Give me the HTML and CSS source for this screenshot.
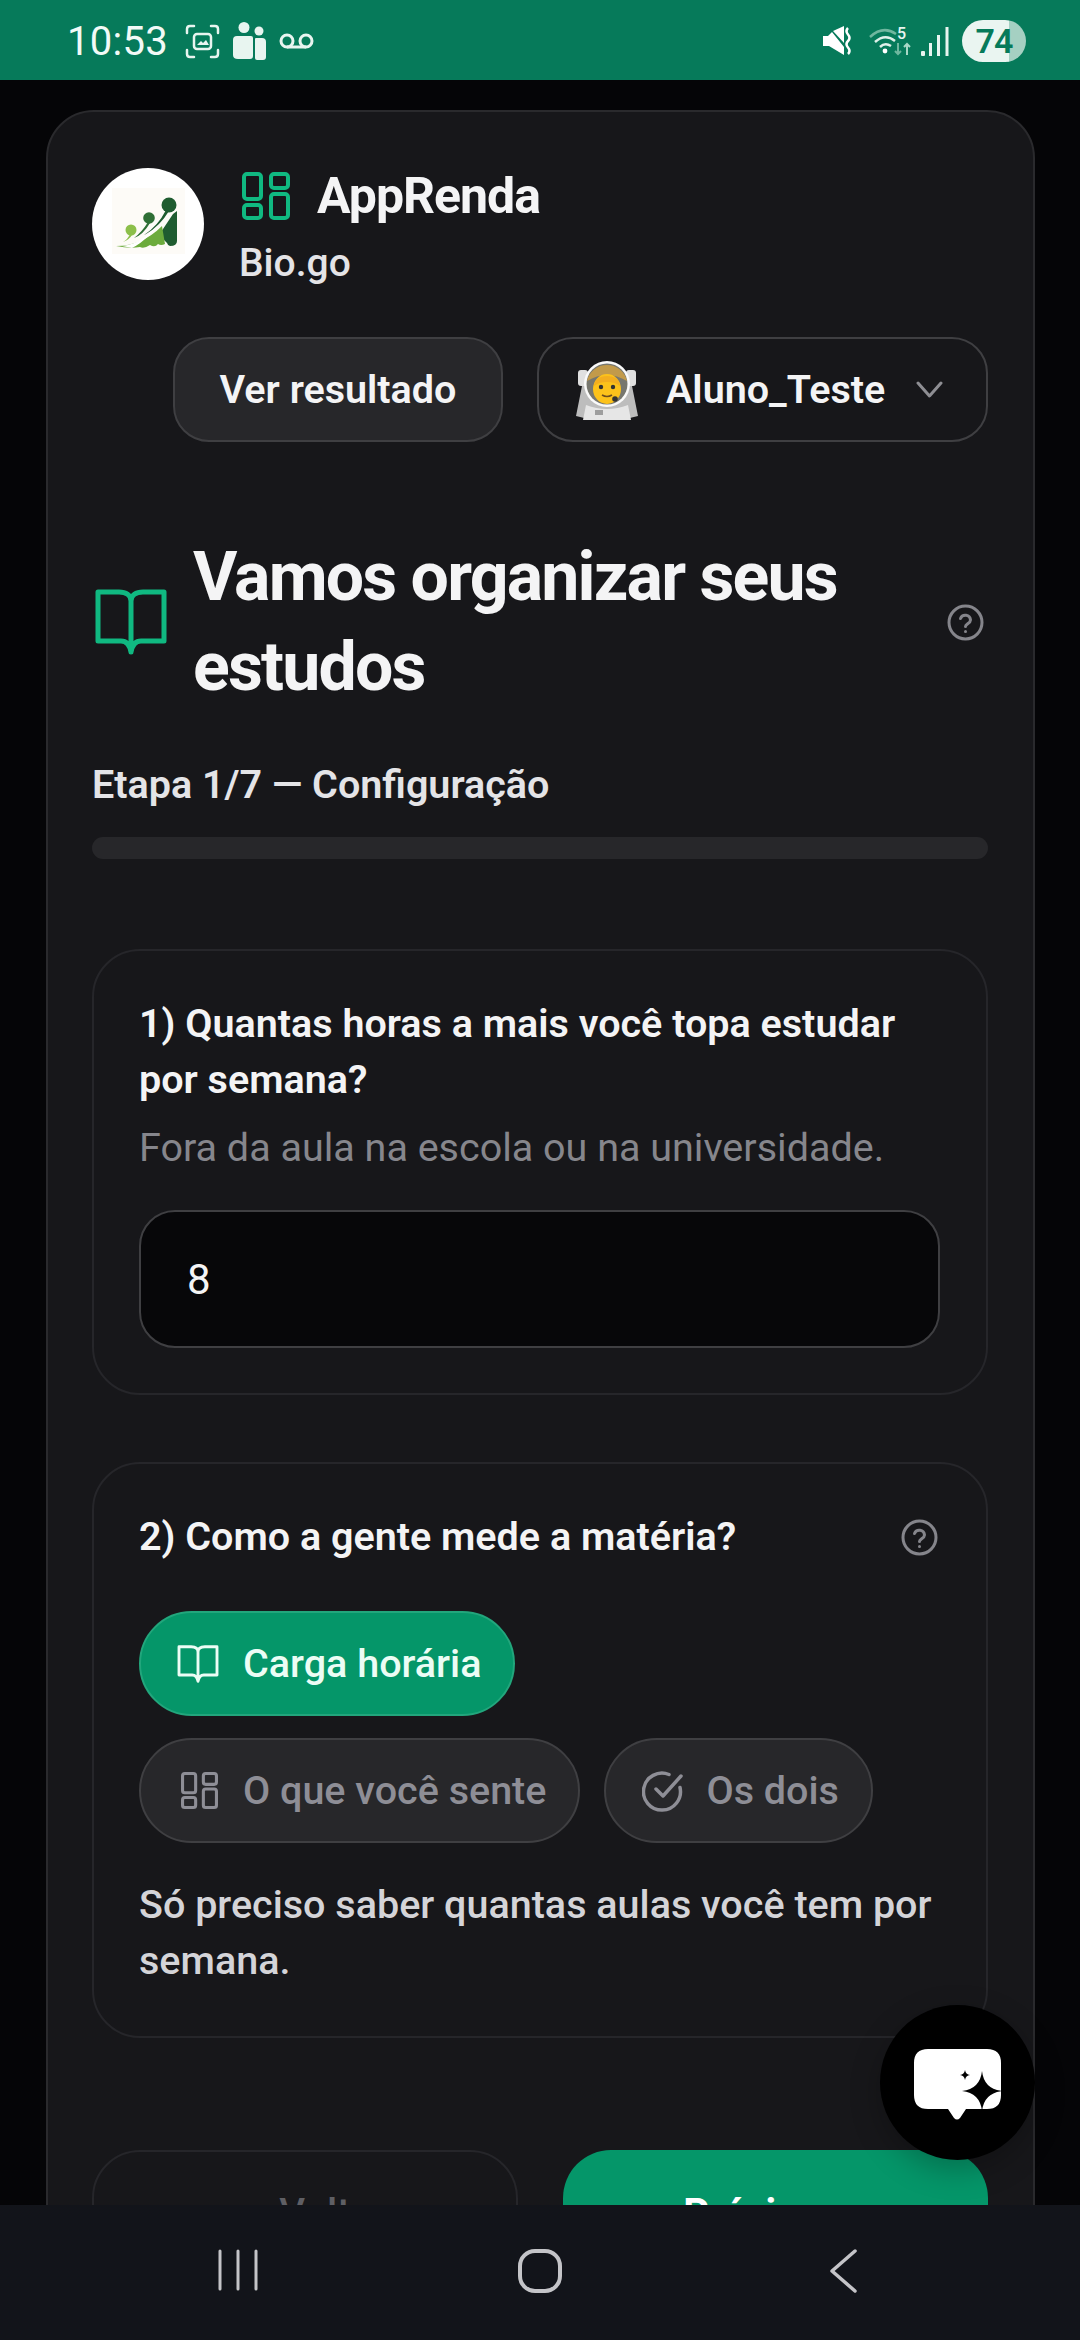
FILE: index.html
```html
<!DOCTYPE html>
<html lang="pt-BR">
<head>
<meta charset="utf-8">
<title>AppRenda</title>
<link rel="stylesheet" href="styles.css">
</head>
<body>
<svg class="defs" width="0" height="0" aria-hidden="true">
  <defs>
    <symbol id="i-grid" viewBox="0 0 48 48"><g fill="none" stroke="currentColor" stroke-width="4"><rect x="2" y="2" width="17" height="25" rx="3"/><rect x="29" y="2" width="17" height="14" rx="3"/><rect x="29" y="22" width="17" height="24" rx="3"/><rect x="2" y="33" width="17" height="13" rx="3"/></g></symbol>
    <symbol id="i-book" viewBox="0 0 72 66"><path fill="none" stroke="currentColor" stroke-width="5" stroke-linejoin="round" stroke-linecap="round" d="M3 3H24C31 3 36 6 36 12C36 6 41 3 48 3H69V52H46C41 52 37.500 55 36 63C34.500 55 31 52 26 52H3ZM36 12V63"/></symbol>
    <symbol id="i-help" viewBox="0 0 37 37"><g fill="none" stroke="currentColor" stroke-width="3" stroke-linecap="round"><circle cx="18.500" cy="18.500" r="16.500"/><path d="M13.500 14.500a5.200 5.200 0 0 1 10 1.500c0 3.500-5 4-5 6.500"/><path d="M18.500 27.500v.1"/></g></symbol>
  </defs>
</svg>
<div class="phone">
  <header class="status">
    <div class="status-left">
      <span class="time">10:53</span>
      <svg class="st-shot" viewBox="0 0 35 35" fill="none" stroke="#e8f5f0" stroke-width="2.500" stroke-linecap="round"><path d="M2 9V5q0-3 3-3h4M26 2h4q3 0 3 3v4M33 26v4q0 3-3 3h-4M9 33H5q-3 0-3-3v-4"/><rect x="9" y="10" width="17" height="15" rx="3"/><path d="M12 21l4-4 2 2 3-3 3 5z" fill="#e8f5f0" stroke="none"/></svg>
      <svg class="st-people" viewBox="0 0 33 38" fill="#e8f5f0"><circle cx="11" cy="5.500" r="5.500"/><circle cx="26" cy="9" r="4.500"/><path d="M4 14h14q2 0 2 2v18q0 3-3 3H5q-5 0-5-4V18q0-4 4-4z"/><path d="M23 16h6q4 0 4 4v15q0 3-3 3h-6q-2 0-2-2V17q0-1 1-1z"/></svg>
      <svg class="st-vm" viewBox="0 0 35 16" fill="none" stroke="#e8f5f0" stroke-width="3"><circle cx="8" cy="8" r="6"/><circle cx="27" cy="8" r="6"/><path d="M8 14h19"/></svg>
    </div>
    <div class="status-right">
      <svg class="st-mute" viewBox="0 0 30 30"><path fill="#fff" d="M0 10h5L9 6 21 21v8L6 20H0z"/><path fill="#fff" d="M10 5L21 0v17z"/><path d="M25 2q-3 3 0 6.500t0 6.500 0 6.500 0 6.500" fill="none" stroke="#fff" stroke-width="2.500"/></svg>
      <svg class="st-wifi" viewBox="0 0 43 30" fill="none"><path d="M1 11Q14-1 27 8" stroke="#6fb79f" stroke-width="2.500"/><path d="M6 16q10-9 20-1M11 21q5-5 11-1" stroke="#dff1ea" stroke-width="2.500"/><circle cx="16" cy="25" r="2.400" fill="#fff"/><text x="28" y="13" class="wifi-5">5</text><path d="M29 17v11m-3-3l3 3 3-3" stroke="#6fb79f" stroke-width="2"/><path d="M38 29V18m-3 3l3-3 3 3" stroke="#a9d8c6" stroke-width="2"/></svg>
      <svg class="st-signal" viewBox="0 0 28 29" fill="#e8f5f0"><rect x="0" y="24" width="4" height="5" rx="1"/><rect x="8" y="16" width="3" height="13"/><rect x="16" y="8" width="3" height="21"/><rect x="24.500" y="0" width="3" height="29"/></svg>
      <span class="battery">74</span>
    </div>
  </header>

  <main class="content">
    <section class="shell">
      <div class="brand">
        <div class="logo">
          <svg viewBox="0 0 112 112" width="112" height="112"><rect x="20" y="20" width="73" height="66" fill="#fdfbf7"/><path d="M78 78q-2 0-3-3l-8-8 14-21 4-3v30q0 5-7 5z" fill="#1f5c30"/><path d="M24 78q26 0 46-20l3 18q-4 2-7 0-3 4-8 1-6 4-10 2-10 2-24-1z" fill="#6cab3c"/><path d="M30 78q24-2 42-31-14 24-32 33z" fill="#fff"/><circle cx="77" cy="37" r="7.500" fill="#1f5c30"/><circle cx="57" cy="50" r="5.800" fill="#2f6f36"/><circle cx="39" cy="62" r="5.500" fill="#8cbf4a"/><path d="M74 42Q66 58 52 67l2-1Q68 58 77 43z" fill="#1f5c30"/><path d="M56 54q-6 10-14 16 9-3 16-15z" fill="#2f6f36"/><path d="M38 66q-2 5-7 8 6-2 9-7z" fill="#8cbf4a"/></svg>
        </div>
        <div class="brand-text">
          <div class="brand-title">
            <svg class="brand-icon"><use href="#i-grid"/></svg>
            <h1 class="brand-name">AppRenda</h1>
          </div>
          <div class="brand-sub">Bio.go</div>
        </div>
      </div>

      <div class="actions">
        <button class="btn btn-result">Ver resultado</button>
        <button class="btn btn-user">
          <svg class="avatar" viewBox="0 0 62 60"><path d="M8 16q0-4 5-4h36q5 0 5 4l8 40q-14 4-31 4T0 56z" fill="#bdbdbd"/><rect x="2" y="10" width="10" height="16" rx="3" fill="#e0e0e0"/><rect x="50" y="10" width="10" height="16" rx="3" fill="#e0e0e0"/><path d="M10 45q21 8 42 0l3 15H7z" fill="#e6e6e6"/><circle cx="31" cy="24" r="23" fill="#fafafa"/><circle cx="31" cy="24" r="20.500" fill="#77776f"/><path d="M11 21a20.500 20.500 0 0 1 40 0q-20-12-40 0z" fill="#c29a4a"/><ellipse cx="31" cy="29" rx="14" ry="15" fill="#fcc21b"/><path d="M18 26q1-10 13-10t13 10q-5-4-13-4t-13 4z" fill="#f3ae1f"/><circle cx="25" cy="27" r="2.200" fill="#333"/><circle cx="37" cy="27" r="2.200" fill="#333"/><path d="M26 35q5 3 10 0" fill="none" stroke="#6d4c1d" stroke-width="1.600"/><circle cx="39" cy="39" r="2.800" fill="#333"/><rect x="19" y="50" width="8" height="5" fill="#9e9e9e"/></svg>
          <span>Aluno_Teste</span>
          <svg class="chevron" viewBox="0 0 27 17" fill="none" stroke="#8e8e93" stroke-width="3" stroke-linecap="round" stroke-linejoin="round"><path d="M2 2l11.500 13L25 2"/></svg>
        </button>
      </div>

      <div class="title-row">
        <svg class="title-icon"><use href="#i-book"/></svg>
        <h2 class="title">Vamos organizar seus estudos</h2>
        <svg class="help help-title"><use href="#i-help"/></svg>
      </div>

      <div class="step">Etapa 1/7 — Configuração</div>
      <div class="progress"></div>

      <section class="panel panel-one">
        <h3 class="question">1) Quantas horas a mais você topa estudar por semana?</h3>
        <p class="hint">Fora da aula na escola ou na universidade.</p>
        <div class="input">8</div>
      </section>

      <section class="panel panel-two">
        <div class="question-row">
          <h3 class="question">2) Como a gente mede a matéria?</h3>
          <svg class="help"><use href="#i-help"/></svg>
        </div>
        <div class="pills">
          <button class="pill pill-on"><svg class="pill-book"><use href="#i-book"/></svg>Carga horária</button>
          <button class="pill"><svg class="pill-grid"><use href="#i-grid"/></svg>O que você sente</button>
          <button class="pill"><svg class="pill-check" viewBox="0 0 42 42" fill="none" stroke="currentColor" stroke-width="3.500" stroke-linecap="round" stroke-linejoin="round"><path d="M38 17.500A18.500 18.500 0 1 1 27 4.500"/><path d="M14 19l7 7L39 6"/></svg>Os dois</button>
        </div>
        <p class="note">Só preciso saber quantas aulas você tem por semana.</p>
      </section>

      <div class="footer-btns">
        <button class="cta cta-back">Voltar</button>
        <button class="cta cta-next">Próximo</button>
      </div>
    </section>
  </main>

  <button class="fab" aria-label="Assistente">
    <svg viewBox="0 0 87 72" width="87" height="72"><path fill="#fff" d="M14 0H73Q87 0 87 14V46Q87 60 73 60H52L46 69Q43 72 40 69L34 60H14Q0 60 0 46V14Q0 0 14 0Z"/><path fill="#000" d="M68 22Q70 40 88 42 70 44 68 62 66 44 48 42 66 40 68 22Z"/><path fill="#000" d="M51 21Q51.700 25.300 56 26 51.700 26.700 51 31 50.300 26.700 46 26 50.300 25.300 51 21Z"/></svg>
  </button>

  <nav class="navbar">
    <svg class="nav-recent" viewBox="0 0 40 42" stroke="#c4c4c8" stroke-width="3" stroke-linecap="round"><path d="M2 2v38M20 2v38M38 2v38"/></svg>
    <svg class="nav-home" viewBox="0 0 44 44" fill="none" stroke="#c4c4c8" stroke-width="4"><rect x="2" y="2" width="40" height="40" rx="15"/></svg>
    <svg class="nav-back" viewBox="0 0 27 44" fill="none" stroke="#c4c4c8" stroke-width="3.500" stroke-linecap="round" stroke-linejoin="round"><path d="M25 2L2 22l23 20"/></svg>
  </nav>
</div>
</body>
</html>
```
FILE: styles.css
```css
* { box-sizing: border-box; margin: 0; padding: 0; }
html, body { width: 1080px; height: 2340px; overflow: hidden; background: #050507; }
body { font-family: Roboto, "Liberation Sans", sans-serif; color: #f4f4f5; }
button { font-family: inherit; cursor: pointer; }
.defs { position: absolute; }

.phone { position: relative; width: 1080px; height: 2340px; display: flex; flex-direction: column; overflow: hidden; }

/* status bar */
.status { flex: 0 0 80px; background: #067a5a; display: flex; justify-content: space-between; align-items: center; padding: 2px 54px 0 67px; }
.status-left, .status-right { display: flex; align-items: center; }
.time { font-size: 40px; color: #f2faf7; width: 118px; letter-spacing: .3px; }
.st-shot { width: 35px; height: 35px; margin-right: 13px; }
.st-people { width: 33px; height: 38px; margin-right: 13px; }
.st-vm { width: 35px; height: 16px; }
.st-mute { width: 30px; height: 30px; margin-right: 16px; }
.st-wifi { width: 43px; height: 30px; margin-right: 9px; }
.wifi-5 { font: 500 16px Roboto, sans-serif; fill: #e8f5f0; }
.st-signal { width: 28px; height: 29px; margin-right: 13px; }
.battery { width: 64px; height: 42px; border-radius: 21px; background: linear-gradient(90deg, #eaf5f1 0 74%, #a5d0c2 74% 100%); color: #067a5a; font-size: 34px; font-weight: 600; text-align: center; line-height: 42px; letter-spacing: -1px; }

/* page */
.content { flex: 1 1 0; min-height: 0; overflow: hidden; padding: 30px 45px 0 46px; }
.shell { background: #17171a; border: 2px solid #2a2a2d; border-radius: 48px; padding: 56px 45px 60px 44px; }

.brand { display: flex; align-items: flex-start; gap: 35px; height: 112px; }
.logo { width: 112px; height: 112px; border-radius: 50%; background: #fff; overflow: hidden; flex: none; }
.logo svg { display: block; }
.brand-text { display: flex; flex-direction: column; }
.brand-title { display: flex; align-items: center; gap: 27px; height: 56px; margin-left: 3px; }
.brand-icon { width: 48px; height: 48px; color: #10b981; }
.brand-name { font-size: 50px; font-weight: 700; letter-spacing: -1px; line-height: 56px; color: #f4f4f5; }
.brand-sub { font-size: 39px; font-weight: 500; line-height: 46px; margin-top: 16px; color: #e4e4e7; }

.actions { display: flex; justify-content: flex-end; gap: 34px; margin-top: 57px; }
.btn { height: 105px; border-radius: 36px; border: 2px solid #3f3f42; color: #f4f4f5; font-size: 39.500px; font-weight: 600; display: flex; align-items: center; }
.btn-result { width: 330px; background: #27272a; justify-content: center; }
.btn-user { width: 451px; background: #17171a; padding: 0 0 0 37px; }
.avatar { width: 62px; height: 60px; margin-right: 28px; }
.chevron { width: 27px; height: 17px; margin-left: 31px; }

.title-row { display: flex; align-items: center; margin-top: 90px; }
.title-icon { width: 72px; height: 66px; flex: none; margin: 0 26px 0 3px; color: #10b981; }
.title { font-size: 68px; font-weight: 700; line-height: 90px; letter-spacing: -1.800px; width: 720px; color: #f4f4f5; }
.help { width: 37px; height: 37px; color: #85858b; flex: none; }
.help-title { margin-left: auto; margin-right: 4px; }

.step { font-size: 39.500px; font-weight: 600; line-height: 56px; margin-top: 45px; color: #e4e4e7; }
.progress { height: 22px; border-radius: 11px; background: #27272a; margin-top: 24px; }

.panel { border: 2px solid #26262a; border-radius: 48px; padding: 45px 46px 45px 45px; }
.panel-one { margin-top: 90px; }
.panel-two { margin-top: 67px; padding-bottom: 47px; }
.question { font-size: 39.500px; font-weight: 600; line-height: 56px; color: #f4f4f5; }
.hint { font-size: 39.500px; line-height: 56px; margin-top: 12px; color: #86868c; }
.input { height: 138px; margin-top: 34px; background: #070709; border: 2px solid #3f3f42; border-radius: 36px; display: flex; align-items: center; padding-left: 46px; font-size: 42px; color: #f4f4f5; }

.question-row { display: flex; justify-content: space-between; align-items: center; padding-right: 2px; }
.pills { display: flex; flex-wrap: wrap; gap: 22px 24px; margin-top: 46px; }
.pill { height: 105px; border-radius: 53px; border: 2px solid #3f3f42; background: #27272a; color: #8e8e96; font-size: 39.500px; font-weight: 500; display: flex; align-items: center; padding: 0 32px 0 36px; }
.pill-on { background: #059669; border-color: #22a67c; color: #ecfdf5; margin-right: 60px; }
.pill-book { width: 42px; height: 38px; margin-right: 24px; }
.pill-grid { width: 37px; height: 37px; margin: 0 25px 0 4px; }
.pill-check { width: 42px; height: 42px; margin-right: 22px; }
.note { font-size: 39.500px; font-weight: 500; line-height: 56px; margin-top: 34px; color: #d4d4d8; }

.footer-btns { display: grid; grid-template-columns: 1fr 1fr; gap: 45px; margin-top: 112px; }
.cta { min-width: 0; height: 126px; border-radius: 48px; font-size: 40px; font-weight: 700; }
.cta-back { background: transparent; border: 2px solid #26262a; color: #5f5f64; font-weight: 500; padding-left: 56px; }
.cta-next { background: #059669; border: 0; color: #fff; padding-right: 34px; }

.fab { position: absolute; left: 880px; top: 2005px; width: 155px; height: 155px; border-radius: 50%; background: #000; border: 0; display: flex; align-items: center; justify-content: center; padding-top: 4px; box-shadow: 0 10px 30px rgba(0,0,0,.25); }
.navbar { position: relative; flex: 0 0 135px; background: #12141a; display: flex; align-items: flex-start; padding: 44px 223px 0 218px; justify-content: space-between; }
.nav-recent { width: 40px; height: 42px; }
.nav-home { width: 44px; height: 44px; margin-right: 8px; }
.nav-back { width: 27px; height: 44px; }
```
